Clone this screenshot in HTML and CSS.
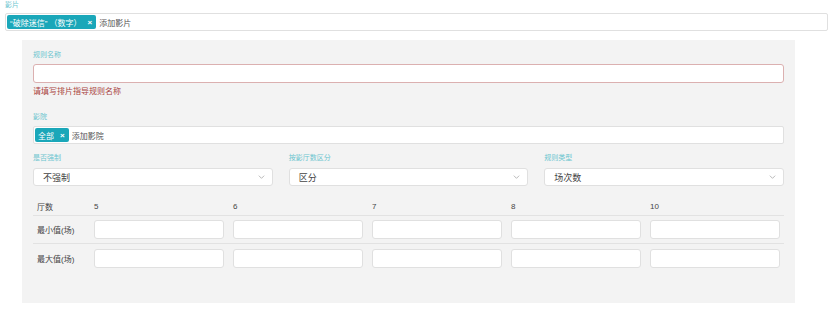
FILE: index.html
```html
<!DOCTYPE html>
<html lang="zh-CN">
<head>
  <meta charset="UTF-8">
  <meta name="viewport" content="width=device-width, initial-scale=1.0">
  <title>排片指导规则</title>
  <link rel="stylesheet" href="styles.css">
</head>
<body>
  <div class="page">
    <div class="field-label">影片</div>
    <div class="tag-input">
      <span class="tag">“破除迷信” （数字）<span class="tag-close">×</span></span>
      <span class="tag-placeholder">添加影片</span>
    </div>

    <div class="panel">
      <div class="field-label">规则名称</div>
      <input class="text-input has-error" type="text">
      <div class="error-text">请填写排片指导规则名称</div>

      <div class="field-label cinema-label">影院</div>
      <div class="tag-input">
        <span class="tag">全部<span class="tag-close">×</span></span>
        <span class="tag-placeholder">添加影院</span>
      </div>

      <div class="select-row">
        <div class="select-group">
          <div class="field-label">是否强制</div>
          <div class="select">
            <span>不强制</span>
            <svg class="chevron" viewBox="0 0 10 6"><path d="M1 1l4 4 4-4" /></svg>
          </div>
        </div>
        <div class="select-group">
          <div class="field-label">按影厅数区分</div>
          <div class="select">
            <span>区分</span>
            <svg class="chevron" viewBox="0 0 10 6"><path d="M1 1l4 4 4-4" /></svg>
          </div>
        </div>
        <div class="select-group">
          <div class="field-label">规则类型</div>
          <div class="select">
            <span>场次数</span>
            <svg class="chevron" viewBox="0 0 10 6"><path d="M1 1l4 4 4-4" /></svg>
          </div>
        </div>
      </div>

      <div class="rule-table">
        <div class="table-row table-head">
          <div class="row-label">厅数</div>
          <div class="cell">5</div>
          <div class="cell">6</div>
          <div class="cell">7</div>
          <div class="cell">8</div>
          <div class="cell">10</div>
        </div>
        <div class="table-row">
          <div class="row-label">最小值(场)</div>
          <div class="cell"><input class="cell-input" type="text"></div>
          <div class="cell"><input class="cell-input" type="text"></div>
          <div class="cell"><input class="cell-input" type="text"></div>
          <div class="cell"><input class="cell-input" type="text"></div>
          <div class="cell"><input class="cell-input" type="text"></div>
        </div>
        <div class="table-row last">
          <div class="row-label">最大值(场)</div>
          <div class="cell"><input class="cell-input" type="text"></div>
          <div class="cell"><input class="cell-input" type="text"></div>
          <div class="cell"><input class="cell-input" type="text"></div>
          <div class="cell"><input class="cell-input" type="text"></div>
          <div class="cell"><input class="cell-input" type="text"></div>
        </div>
      </div>
    </div>
  </div>
</body>
</html>
```

FILE: styles.css
```css
* {
  margin: 0;
  padding: 0;
  box-sizing: border-box;
}

body {
  font-family: 'Liberation Sans', 'Noto Sans CJK SC', sans-serif;
  font-size: 9px;
  color: #444;
  background: #ffffff;
}

.page {
  padding: 0 4px 0 5px;
}

.field-label {
  font-size: 7px;
  line-height: 10px;
  color: #6cc5cf;
  margin-bottom: 3px;
}

.tag-input {
  display: flex;
  align-items: center;
  height: 18px;
  border: 1px solid #e0e0e0;
  border-radius: 2px;
  background: #ffffff;
  padding: 0 1px;
}

.tag {
  display: inline-flex;
  align-items: center;
  height: 15px;
  padding: 0 4px 0 3px;
  background: #1aa7b9;
  color: #ffffff;
  font-size: 8px;
  border-radius: 2px;
}

.tag-close {
  margin-left: 6px;
  font-weight: bold;
  font-size: 8px;
}

.tag-placeholder {
  margin-left: 3px;
  font-size: 8px;
  color: #555;
}

.panel {
  margin: 9px 33px 0 17px;
  background: #f3f3f3;
  padding: 10px 11px 31px;
}

.panel .field-label {
  margin-bottom: 4px;
}

.text-input {
  display: block;
  width: 100%;
  height: 19px;
  border: 1px solid #e0e0e0;
  border-radius: 3px;
  background: #ffffff;
  outline: none;
}

.text-input.has-error {
  border-color: #dbb0b0;
}

.error-text {
  margin-top: 3px;
  font-size: 8px;
  line-height: 12px;
  color: #a94442;
}

.panel .cinema-label {
  margin-top: 14px;
}

.tag-input .tag {
  height: 14px;
}

.select-row {
  display: grid;
  grid-template-columns: repeat(3, 1fr);
  gap: 16px;
  margin-top: 9px;
}

.select-group .field-label {
  margin-bottom: 5px;
}

.select {
  display: flex;
  align-items: center;
  justify-content: space-between;
  height: 18px;
  padding: 0 7px 0 9px;
  background: #ffffff;
  border: 1px solid #e0e0e0;
  border-radius: 3px;
  font-size: 9px;
}

.chevron {
  width: 7px;
  height: 4px;
  fill: none;
  stroke: #999;
  stroke-width: 1;
}

.rule-table {
  margin-top: 11px;
}

.table-row {
  display: grid;
  grid-template-columns: 61px repeat(4, 139px) 1fr;
  align-items: center;
  height: 28px;
  border-bottom: 1px solid #e2e2e2;
}

.table-row.table-head {
  height: 19px;
}

.table-row.last {
  border-bottom: none;
}

.row-label {
  padding-left: 4px;
  font-size: 8px;
}

.cell {
  font-size: 8px;
}

.cell-input {
  display: block;
  width: 130px;
  height: 19px;
  border: 1px solid #e0e0e0;
  border-radius: 3px;
  background: #ffffff;
  outline: none;
}
```
